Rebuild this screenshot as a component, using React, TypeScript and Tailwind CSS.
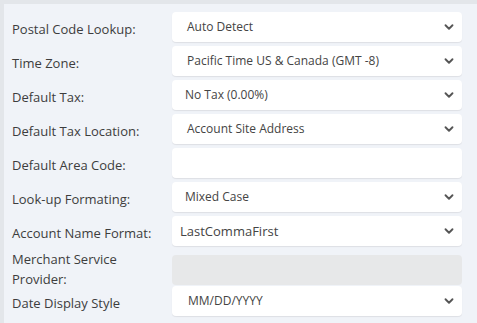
import { ChevronDown } from "lucide-react";

type Row = {
  label: string;
  value?: string;
  kind: "select" | "input" | "disabled";
  pad?: string;
  size?: string;
};

const rows: Row[] = [
  { label: "Postal Code Lookup:", value: "Auto Detect", kind: "select" },
  { label: "Time Zone:", value: "Pacific Time US & Canada (GMT -8)", kind: "select" },
  { label: "Default Tax:", value: "No Tax (0.00%)", kind: "select", pad: "pl-[13px]" },
  { label: "Default Tax Location:", value: "Account Site Address", kind: "select" },
  { label: "Default Area Code:", kind: "input" },
  { label: "Look-up Formating:", value: "Mixed Case", kind: "select", pad: "pl-[13px]" },
  { label: "Account Name Format:", value: "LastCommaFirst", kind: "select", pad: "pl-[8px]", size: "text-[13px]" },
  { label: "Merchant Service Provider:", kind: "disabled" },
  { label: "Date Display Style", value: "MM/DD/YYYY", kind: "select", pad: "pl-[16px]" },
];

function Field({ row }: { row: Row }) {
  if (row.kind === "disabled") {
    return <div className="h-[30px] rounded-[4px] bg-[#e7e8e9]" />;
  }
  return (
    <div className="h-[30px] rounded-[4px] bg-white shadow-[0_1px_1px_rgba(0,0,0,0.08)] flex items-center justify-between pr-[6px]">
      <span className={`${row.pad ?? "pl-[15px]"} ${row.size ?? "text-[12px]"} text-[#444] leading-none`}>
        {row.value}
      </span>
      {row.kind === "select" && (
        <ChevronDown size={14} strokeWidth={3.2} className="text-[#555]" />
      )}
    </div>
  );
}

export default function App() {
  return (
    <div className="w-[477px] h-[323px] bg-[#e3e6ea] pt-[4px] pl-[4px] overflow-hidden" style={{ fontFamily: '"Open Sans", sans-serif' }}>
      <div className="h-full bg-[#f0f3f8] pt-[8px] pl-[8px]">
        <div className="flex flex-col gap-[4px] w-[450px]">
          {rows.map((row) => (
            <div
              key={row.label}
              className={`grid grid-cols-[160px_290px] items-center ${row.kind === "disabled" ? "h-[32px]" : "h-[30px]"}`}
            >
              <div
                className={`text-[13px] text-[#3d3d3d] ${row.kind === "disabled" ? "leading-[20px] w-[110px] -mt-[1px]" : "leading-none pt-[5px]"}`}
              >
                {row.label}
              </div>
              <Field row={row} />
            </div>
          ))}
        </div>
      </div>
    </div>
  );
}
